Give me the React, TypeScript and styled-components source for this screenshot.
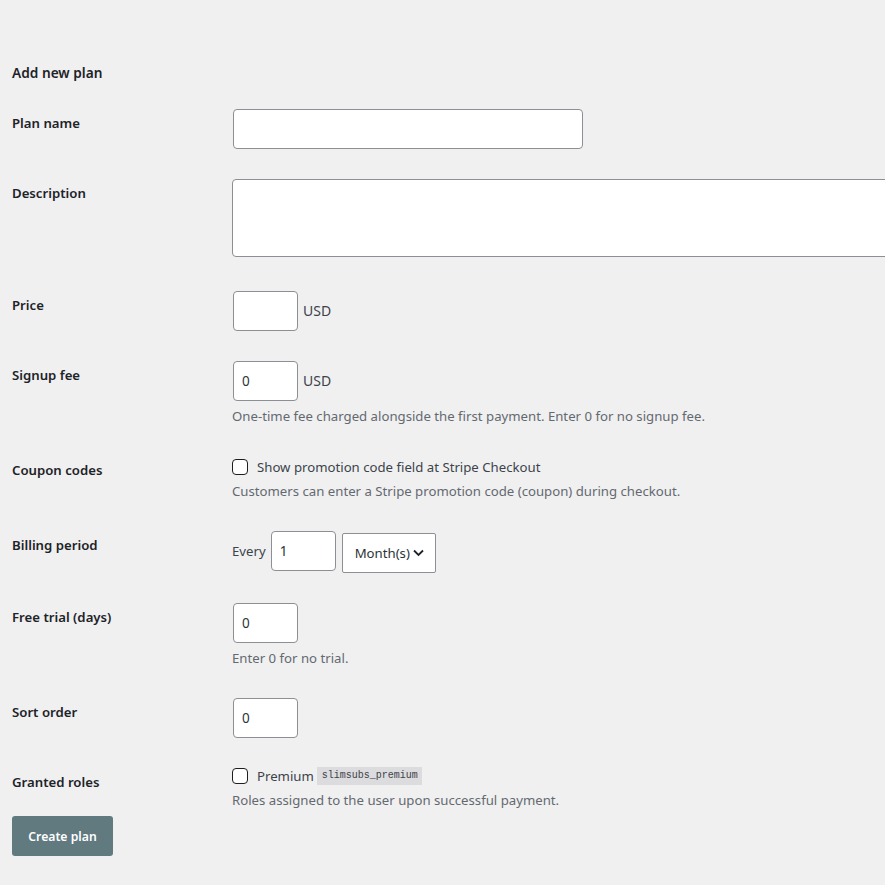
import React from "react";
import styled, { createGlobalStyle } from "styled-components";

const Global = createGlobalStyle`
  html, body { margin: 0; padding: 0; background: #f0f0f1; }
  body { font-family: "Noto Sans", "Open Sans", sans-serif; color: #3c434a; font-size: 13px; }
  * { box-sizing: border-box; }
`;

const Page = styled.div`
  padding: 62px 0 29px 12px;
  min-height: 885px;
`;

const Title = styled.h3`
  margin: 0;
  font-size: 13.7px;
  font-weight: 600;
  color: #1d2327;
  line-height: 22px;
`;

const Form = styled.form`
  display: flex;
  flex-direction: column;
  margin-top: 10px;
`;

const Row = styled.div<{ $bottom?: number }>`
  display: grid;
  grid-template-columns: 220px 1fr;
  padding-bottom: ${(p) => p.$bottom ?? 15}px;
`;

const Label = styled.label`
  padding-top: 20px;
  font-size: 13.2px;
  font-weight: 600;
  color: #1d2327;
  line-height: 18px;
`;

const Field = styled.div<{ $top?: number }>`
  padding-top: ${(p) => p.$top ?? 15}px;
  display: flex;
  flex-direction: column;
  align-items: flex-start;
  min-width: 0;
`;

const Input = styled.input<{ $w?: number }>`
  width: ${(p) => p.$w ?? 65}px;
  height: 40px;
  margin: 0 0 0 1px;
  border: 1px solid #8c8f94;
  border-radius: 4px;
  background: #fff;
  padding: 0 8px;
  font-family: inherit;
  font-size: 13.5px;
  color: #2c3338;
  outline: none;
`;

const TextArea = styled.textarea`
  width: calc(100% + 10px);
  height: 78px;
  border: 1px solid #8c8f94;
  border-radius: 4px;
  background: #fff;
  resize: none;
  display: block;
  margin-bottom: 4px;
  font-family: inherit;
  outline: none;
`;

const Inline = styled.div`
  display: flex;
  align-items: center;
  gap: 5px;
`;

const Unit = styled.span`
  font-size: 14px;
  color: #3c434a;
  line-height: 20px;
`;

const Desc = styled.p<{ $mt?: number }>`
  margin: ${(p) => p.$mt ?? 5}px 0 0;
  font-size: 13.2px;
  line-height: 20px;
  color: #646970;
`;

const CheckLine = styled.label`
  display: flex;
  align-items: center;
  gap: 9px;
  height: 22px;
  font-size: 13.2px;
  color: #3c434a;
`;

const Check = styled.input`
  appearance: none;
  margin: 0;
  width: 16px;
  height: 16px;
  border: 1px solid #1e1e1e;
  border-radius: 4px;
  background: #fff;
`;

const Code = styled.code`
  font-family: "Liberation Mono", "DejaVu Sans Mono", monospace;
  font-size: 10px;
  background: #dcdcde;
  color: #3c434a;
  padding: 2px 4px 2px 5px;
  line-height: 14px;
  margin-left: -6px;
`;

const Billing = styled.div`
  display: flex;
  align-items: flex-start;
  gap: 4px;
  height: 42px;
`;

const Every = styled.span`
  font-size: 13.2px;
  line-height: 40px;
  color: #3c434a;
`;

const SelectWrap = styled.span`
  position: relative;
  display: inline-block;
  margin-top: 2px;
  margin-left: 2px;
`;

const Select = styled.select`
  appearance: none;
  width: 94px;
  height: 40px;
  border: 1px solid #8c8f94;
  border-radius: 2px;
  background: #fff;
  padding: 0 20px 0 12px;
  font-family: inherit;
  font-size: 13.2px;
  color: #2c3338;
  outline: none;
`;

const Chevron = styled.svg`
  position: absolute;
  right: 12px;
  top: 16px;
  pointer-events: none;
`;

const Button = styled.button`
  margin-top: 6px;
  width: 101px;
  height: 40px;
  background: #607a80;
  border: none;
  border-radius: 3px;
  color: #fff;
  font-family: inherit;
  font-size: 12.2px;
  font-weight: 600;
`;

export default function App() {
  return (
    <>
      <Global />
      <Page>
        <Title>Add new plan</Title>
        <Form onSubmit={(e) => e.preventDefault()}>
          <Row>
            <Label>Plan name</Label>
            <Field>
              <Input $w={350} />
            </Field>
          </Row>
          <Row>
            <Label>Description</Label>
            <Field>
              <TextArea />
            </Field>
          </Row>
          <Row>
            <Label>Price</Label>
            <Field>
              <Inline>
                <Input />
                <Unit>USD</Unit>
              </Inline>
            </Field>
          </Row>
          <Row>
            <Label>Signup fee</Label>
            <Field>
              <Inline>
                <Input defaultValue="0" />
                <Unit>USD</Unit>
              </Inline>
              <Desc>One-time fee charged alongside the first payment. Enter 0 for no signup fee.</Desc>
            </Field>
          </Row>
          <Row>
            <Label>Coupon codes</Label>
            <Field>
              <CheckLine>
                <Check type="checkbox" />
                Show promotion code field at Stripe Checkout
              </CheckLine>
              <Desc $mt={3}>Customers can enter a Stripe promotion code (coupon) during checkout.</Desc>
            </Field>
          </Row>
          <Row>
            <Label>Billing period</Label>
            <Field>
              <Billing>
                <Every>Every</Every>
                <Input defaultValue="1" />
                <SelectWrap>
                  <Select defaultValue="month">
                    <option value="month">Month(s)</option>
                    <option value="day">Day(s)</option>
                    <option value="week">Week(s)</option>
                    <option value="year">Year(s)</option>
                  </Select>
                  <Chevron width="11" height="8" viewBox="0 0 11 8">
                    <path d="M1 1.5 L5.5 6 L10 1.5" fill="none" stroke="#1d2327" strokeWidth="1.8" />
                  </Chevron>
                </SelectWrap>
              </Billing>
            </Field>
          </Row>
          <Row>
            <Label>Free trial (days)</Label>
            <Field>
              <Input defaultValue="0" />
              <Desc>Enter 0 for no trial.</Desc>
            </Field>
          </Row>
          <Row>
            <Label>Sort order</Label>
            <Field>
              <Input defaultValue="0" />
            </Field>
          </Row>
          <Row $bottom={0}>
            <Label>Granted roles</Label>
            <Field $top={12}>
              <CheckLine>
                <Check type="checkbox" />
                Premium <Code>slimsubs_premium</Code>
              </CheckLine>
              <Desc $mt={3}>Roles assigned to the user upon successful payment.</Desc>
            </Field>
          </Row>
          <div>
            <Button type="submit">Create plan</Button>
          </div>
        </Form>
      </Page>
    </>
  );
}
